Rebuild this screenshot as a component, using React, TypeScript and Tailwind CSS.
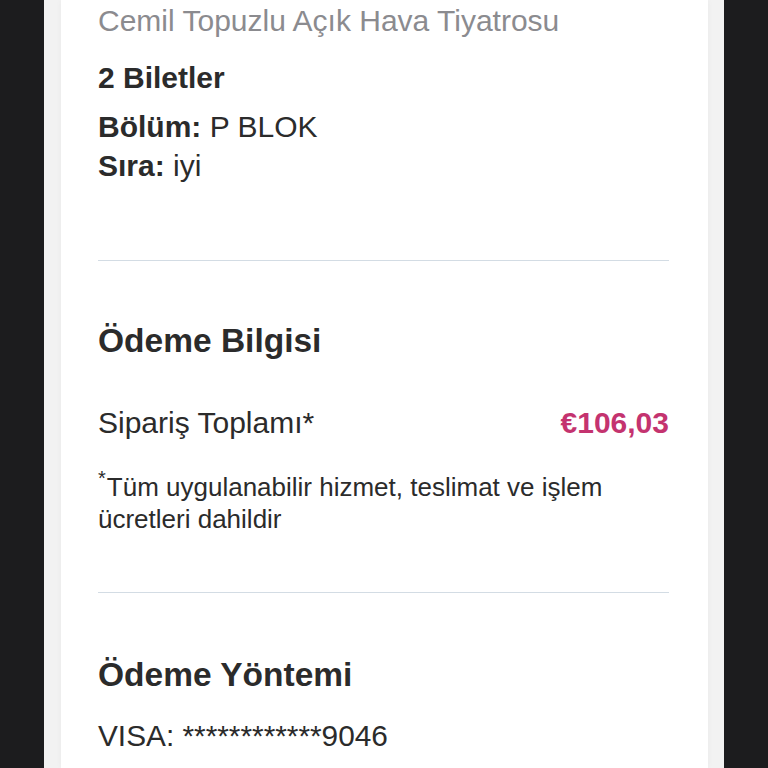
export default function App() {
  const font = { fontFamily: '"Liberation Sans", Arial, Helvetica, sans-serif' };
  return (
    <div className="h-[768px] w-[768px] overflow-hidden bg-[#1c1c1e] pl-[44px] pr-[44px]" style={font}>
      <div className="h-full bg-[#f2f2f2] pl-[17px] pr-[16px]">
        <div className="h-full bg-white pl-[37px] pr-[39px] pt-[1px] text-[#2b2b2b] shadow-[0_0_6px_rgba(0,0,0,0.04)]">
          <div className="text-[30px] leading-[39px] text-[#8b8b8f]">Cemil Topuzlu Açık Hava Tiyatrosu</div>
          <div className="mt-[18px] text-[30px] font-bold leading-[39px]">2 Biletler</div>
          <div className="mt-[10px] text-[30px] leading-[39px]">
            <span className="font-bold">Bölüm:</span> P BLOK
          </div>
          <div className="text-[30px] leading-[39px]">
            <span className="font-bold">Sıra:</span> iyi
          </div>
          <div className="mt-[75px] h-[1px] bg-[#d3dce4]" />
          <div className="mt-[60px] text-[33.5px] font-bold leading-[40px]">Ödeme Bilgisi</div>
          <div className="mt-[42px] flex items-center justify-between text-[30px] leading-[39px]">
            <span>Sipariş Toplamı*</span>
            <span className="font-bold text-[#c4336f]">€106,03</span>
          </div>
          <div className="mt-[29px] text-[26px] leading-[32px]">
            <span className="mr-[1px] inline-block align-top text-[20px] leading-[14px]">*</span>Tüm uygulanabilir hizmet, teslimat ve işlem ücretleri dahildir
          </div>
          <div className="mt-[57px] h-[1px] bg-[#d3dce4]" />
          <div className="mt-[62px] text-[33.5px] font-bold leading-[40px]">Ödeme Yöntemi</div>
          <div className="mt-[21px] text-[29.8px] leading-[39px]">VISA: ************9046</div>
        </div>
      </div>
    </div>
  );
}
